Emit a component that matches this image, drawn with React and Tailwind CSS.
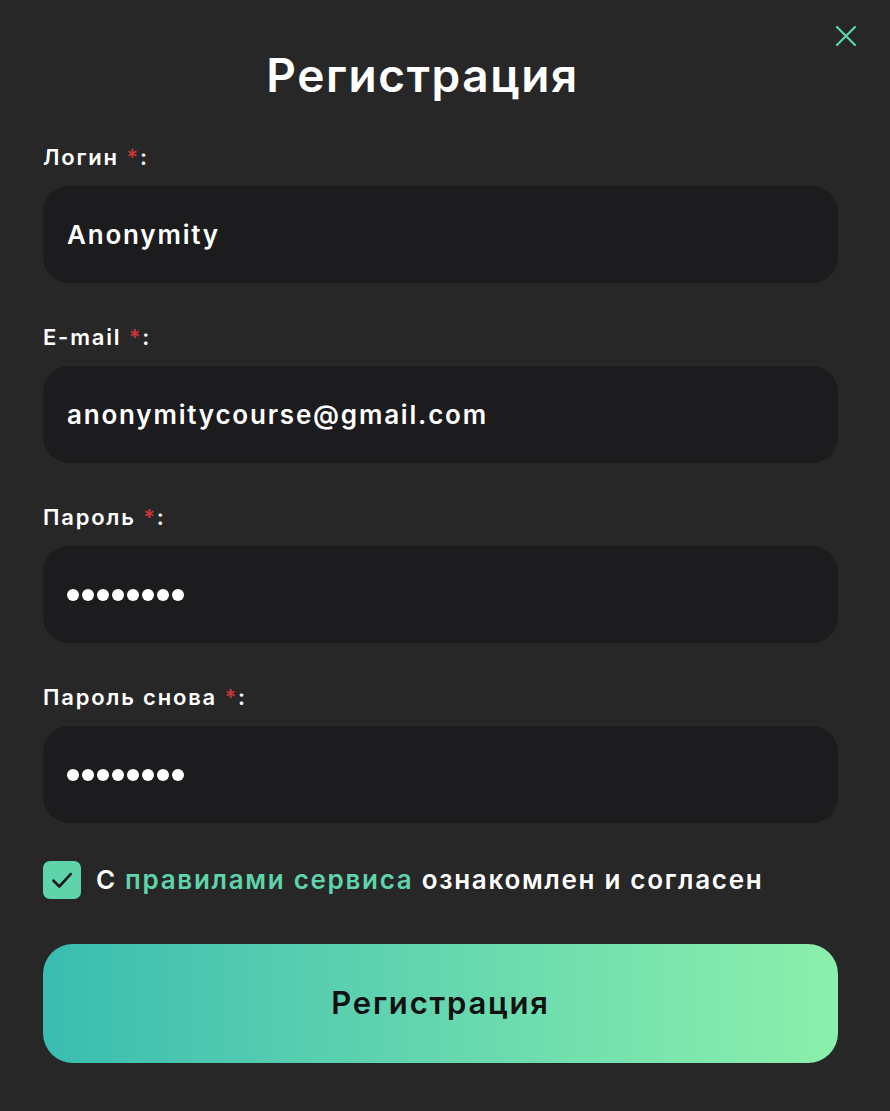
import React from "react";

function Field({ label, value, password }) {
  return (
    <div className="flex flex-col">
      <label className="text-[22px] font-semibold text-white leading-none h-[22px] flex items-center tracking-[1.8px]">
        {label}&nbsp;<span className="text-[#cc3636]">*</span>:
      </label>
      <div className="mt-[18px] h-[97px] rounded-[26px] bg-[#1c1c1e] flex items-center px-6">
        {password ? (
          <div className="flex gap-[3px]">
            {Array.from({ length: 8 }).map((_, i) => (
              <span key={i} className="w-[12px] h-[12px] rounded-full bg-white" />
            ))}
          </div>
        ) : (
          <span className="text-[26px] font-semibold text-white tracking-[1.8px]">{value}</span>
        )}
      </div>
    </div>
  );
}

export default function App() {
  return (
    <div
      className="w-[890px] h-[1111px] bg-[#272727] relative overflow-hidden"
      style={{ fontFamily: "Inter, 'Noto Sans', sans-serif" }}
    >
      <button className="absolute left-[833px] top-[23px] w-[26px] h-[26px] flex items-center justify-center">
        <svg width="24" height="24" viewBox="0 0 24 24" fill="none" stroke="#5cd6ac" strokeWidth="2.2" strokeLinecap="round">
          <path d="M3 3L21 21M21 3L3 21" />
        </svg>
      </button>
      <div className="px-[43px] pr-[52px] pt-[47px] flex flex-col">
        <h1 className="text-[46px] font-semibold text-white text-center leading-[56px] pr-[36px] tracking-[1.6px]">
          Регистрация
        </h1>
        <div className="mt-[43px] flex flex-col gap-[43px]">
          <Field label="Логин" value="Anonymity" />
          <Field label="E-mail" value="anonymitycourse@gmail.com" />
          <Field label="Пароль" password />
          <Field label="Пароль снова" password />
        </div>
        <div className="mt-[37px] flex items-center gap-[15px]">
          <div className="w-[38px] h-[38px] rounded-[7px] bg-[#5fd4ab] flex items-center justify-center">
            <svg width="26" height="26" viewBox="0 0 24 24" fill="none" stroke="#1c1c1e" strokeWidth="2.4" strokeLinecap="round" strokeLinejoin="round">
              <path d="M4 12.5L9.5 18L20 6.5" />
            </svg>
          </div>
          <span className="text-[26px] font-semibold text-white tracking-[1.7px]">
            С <span className="text-[#5fd4ab]">правилами сервиса</span> ознакомлен и согласен
          </span>
        </div>
        <button className="mt-[45px] h-[119px] rounded-[30px] bg-gradient-to-r from-[#38bdb0] to-[#8bf0ab] text-[31px] font-semibold text-[#111] tracking-[1.8px]">
          Регистрация
        </button>
      </div>
    </div>
  );
}
